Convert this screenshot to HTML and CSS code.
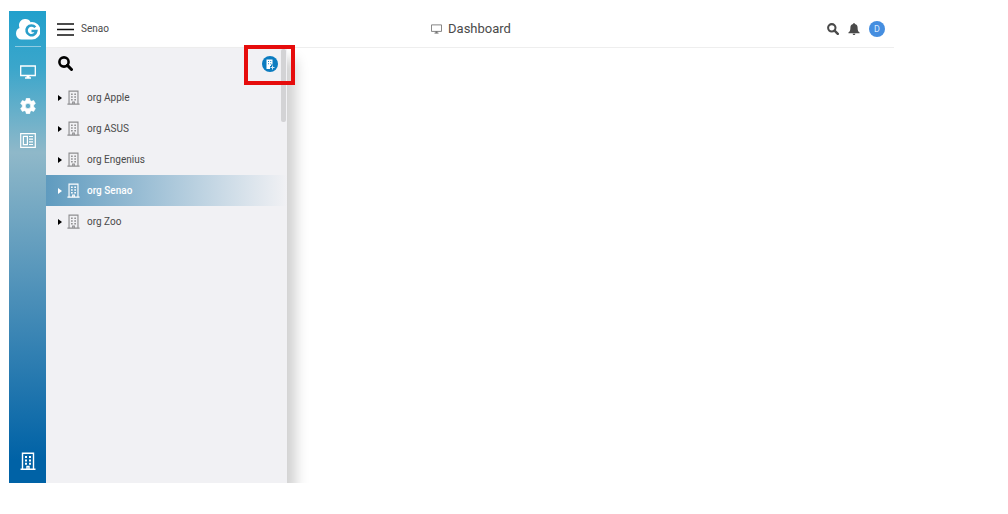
FILE: index.html
```html
<!DOCTYPE html>
<html lang="en">
<head>
<meta charset="utf-8">
<title>Dashboard</title>
<link rel="stylesheet" href="styles.css">
</head>
<body>
<svg class="sprite" aria-hidden="true">
  <symbol id="building" viewBox="0 0 16 18">
    <path d="M2.500 17V1.200h11V17M.5 17.200h15M7 17v-2.500h2V17" fill="none" stroke="currentColor" stroke-width="1.400"/>
    <path d="M5 4h2v2H5zM9 4h2v2H9zM5 7.400h2v2H5zM9 7.400h2v2H9zM5 10.800h2v2H5zM9 10.800h2v2H9z" fill="currentColor"/>
  </symbol>
  <symbol id="monitor" viewBox="0 0 16 14">
    <path d="M.7 1h14.600v9.500H.7zM8 10.500v2M5 13h6" fill="none" stroke="currentColor" stroke-width="1.300"/>
    <path d="M6.500 10.500h3v2.500h-3z" fill="currentColor"/>
  </symbol>
  <symbol id="search" viewBox="0 0 14 14">
    <circle cx="5.600" cy="5.600" r="4.300" fill="none" stroke="currentColor" stroke-width="2.400"/>
    <path d="M8.800 8.800l3.800 3.800" stroke="currentColor" stroke-width="2.800" stroke-linecap="round"/>
  </symbol>
</svg>
<div class="app">
  <nav class="rail" aria-label="Main">
    <a class="rail-logo" href="#" aria-label="Home">
      <svg width="24" height="24" viewBox="0 0 24 24">
        <path d="M6 22.500A5.700 5.700 0 0 1 0 16.800C0 13.700 1.300 11.800 3.500 11C1.800 6.500 4.500 2.300 8.800 2C11.500 1.800 13.500 3 14.600 5.200A8.700 8.700 0 1 1 15.400 22.500z" fill="#fff"/>
        <path d="M19.300 10.300A4.900 4.900 0 1 0 20.300 14H15.500" fill="none" stroke="#2a9fca" stroke-width="2.600"/>
      </svg>
    </a>
    <a class="rail-item" href="#" aria-label="Dashboard"><svg width="16" height="14"><use href="#monitor"/></svg></a>
    <a class="rail-item" href="#" aria-label="Settings">
      <svg width="16" height="16" viewBox="0 0 16 16">
        <path fill-rule="evenodd" stroke="currentColor" stroke-width=".6" stroke-linejoin="round" d="M6.300.3h3.400l.5 2.200 1.300.8 2.200-.7 1.700 2.900-1.700 1.600v1.800l1.700 1.600-1.700 2.900-2.200-.7-1.300.8-.5 2.200H6.300l-.5-2.200-1.300-.8-2.200.7L.6 10.500l1.700-1.600V7.100L.6 5.500l1.700-2.900 2.200.7 1.300-.8zM8 5.300a2.700 2.700 0 1 0 0 5.400 2.700 2.700 0 0 0 0-5.400z" fill="currentColor"/>
      </svg>
    </a>
    <a class="rail-item" href="#" aria-label="News">
      <svg width="16" height="15" viewBox="0 0 16 15">
        <path d="M.7.7h14.600v13.600H.7zM3.400 3.400h4v8.200h-4zM9 3.500h4M9 6.200h4M9 8.900h4M9 11.500h4" fill="none" stroke="currentColor" stroke-width="1.200"/>
      </svg>
    </a>
    <a class="rail-item rail-bottom" href="#" aria-label="Organizations"><svg width="16" height="18"><use href="#building"/></svg></a>
  </nav>
  <header class="header">
    <div class="header-left">
      <button class="icon-button" aria-label="Menu">
        <svg width="17" height="13" viewBox="0 0 17 13"><path d="M0 1h17M0 6.500h17M0 12h17" stroke="#111" stroke-width="1.700"/></svg>
      </button>
      <span>Senao</span>
    </div>
    <h1 class="title"><svg width="11" height="10"><use href="#monitor"/></svg>Dashboard</h1>
    <div class="header-right">
      <button class="icon-button" aria-label="Search"><svg width="12" height="12"><use href="#search"/></svg></button>
      <button class="icon-button" aria-label="Notifications">
        <svg width="12" height="12" viewBox="0 0 12 12"><path d="M6 0c.6 0 .9.400.9.900C8.800 1.300 9.600 2.700 9.600 4.500c0 2.900.5 4 2 4.900v.8H.4v-.8c1.500-.9 2-2 2-4.900C2.400 2.700 3.200 1.300 5.100.9 5.100.4 5.400 0 6 0zM4.600 10.700h2.800c-.1.800-.7 1.300-1.400 1.300s-1.300-.5-1.400-1.300z" fill="currentColor"/></svg>
      </button>
      <button class="avatar" aria-label="Account">D</button>
    </div>
  </header>
  <main class="main">
    <aside class="panel">
      <div class="panel-tools">
        <button class="icon-button panel-search" aria-label="Search organizations"><svg width="15" height="15"><use href="#search"/></svg></button>
        <button class="add-org" aria-label="Add organization">
          <svg width="16" height="16" viewBox="0 0 16 16">
            <path d="M4.500 3.500h6v5H9V10H8v3H4.500z" fill="#fff"/>
            <path d="M6 5h.9v1H6zM8.300 5h.9v1h-.9zM6 7.200h.9v1H6zM8.300 7.200h.9v1h-.9z" fill="#0c7cc0"/>
            <path d="M10.500 9.500v4M8.500 11.500h4" stroke="#cfe6f5"/>
          </svg>
        </button>
        <span class="highlight"></span>
      </div>
      <ul class="orgs">
        <li><a class="org" href="#"><span class="caret"></span><svg width="13" height="15"><use href="#building"/></svg><span>org Apple</span></a></li>
        <li><a class="org" href="#"><span class="caret"></span><svg width="13" height="15"><use href="#building"/></svg><span>org ASUS</span></a></li>
        <li><a class="org" href="#"><span class="caret"></span><svg width="13" height="15"><use href="#building"/></svg><span>org Engenius</span></a></li>
        <li><a class="org selected" href="#"><span class="caret"></span><svg width="13" height="15"><use href="#building"/></svg><span>org Senao</span></a></li>
        <li><a class="org" href="#"><span class="caret"></span><svg width="13" height="15"><use href="#building"/></svg><span>org Zoo</span></a></li>
      </ul>
      <span class="scroll-thumb"></span>
    </aside>
  </main>
</div>
</body>
</html>
```
FILE: styles.css
```css
* { box-sizing: border-box; }
body {
  margin: 0;
  padding: 11px 114px 31px 9px;
  background: #fff;
  color: #4a4a4a;
  font: 10px/16px Roboto, sans-serif;
}
svg { display: block; flex: none; }
button { padding: 0; border: 0; background: none; color: inherit; font: inherit; cursor: pointer; }
a { color: inherit; text-decoration: none; }
.sprite { position: absolute; width: 0; height: 0; }

.app {
  display: grid;
  grid-template: 37px 1fr / 37px 1fr;
  min-height: calc(100vh - 42px);
}

.rail {
  grid-row: 1 / 3;
  display: flex;
  flex-direction: column;
  align-items: center;
  background: linear-gradient(#21a0cc 0%, #3ba6cb 12%, #8fb8c9 30%, #0062a6 95%);
  color: #fff;
}
.rail-logo {
  padding: 6px 1px 5px;
  margin-bottom: 8px;
  border-bottom: 1px solid #8fcce2;
}
.rail-item {
  display: flex;
  align-items: center;
  justify-content: center;
  width: 100%;
  height: 34px;
}
.rail-bottom { margin-top: auto; margin-bottom: 5px; }

.header {
  display: grid;
  grid-template-columns: 1fr auto 1fr;
  align-items: center;
  padding: 0 9px 0 11px;
  border-bottom: 1px solid #eee;
}
.header-left { display: flex; align-items: center; gap: 7px; }
.title {
  display: flex;
  align-items: center;
  gap: 6px;
  margin: 0;
  font-size: 13px;
  font-weight: 400;
}
.title svg { color: #777; }
.header-right { display: flex; align-items: center; justify-content: flex-end; gap: 9px; }
.avatar {
  width: 16px;
  height: 16px;
  border-radius: 50%;
  background: #458ee0;
  color: #dbeaff;
  font-size: 9px;
  line-height: 16px;
}

/* The panel shadow is cut at the bottom; the highlight may rise over the header. */
.main { display: flex; clip-path: inset(-8px 0 0 0); }
.panel {
  position: relative;
  width: 241px;
  background: #f1f1f4;
  box-shadow: 9px 11px 12px #d2d2d2;
}
.panel-tools {
  position: relative;
  display: flex;
  align-items: center;
  justify-content: space-between;
  height: 31px;
  padding: 0 9px 0 12px;
}
.panel-search { color: #000; }
.add-org {
  width: 16px;
  height: 16px;
  border-radius: 50%;
  background: #0c7cc0;
}
.highlight {
  position: absolute;
  z-index: 1;
  top: -3px;
  right: -8px;
  width: 51px;
  height: 40px;
  border: 4px solid #e60c0c;
  pointer-events: none;
}
.scroll-thumb {
  position: absolute;
  top: 1px;
  right: 1px;
  width: 5px;
  height: 73px;
  border-radius: 2px;
  background: #d3d3d5;
}

.orgs { margin: 0; padding: 3px 0 0; list-style: none; }
.org {
  display: flex;
  align-items: center;
  height: 31px;
  padding-left: 12px;
}
.org svg { margin: 0 7px 0 5px; color: #8e8e90; }
.caret {
  border: solid transparent;
  border-width: 3px 0 3px 4px;
  border-left-color: #000;
}
.selected {
  background: linear-gradient(90deg, #5f9bbf, #f1f1f4);
  color: #fff;
  font-weight: 500;
}
.selected svg { color: #fff; }
.selected .caret { border-left-color: #fff; }
```
